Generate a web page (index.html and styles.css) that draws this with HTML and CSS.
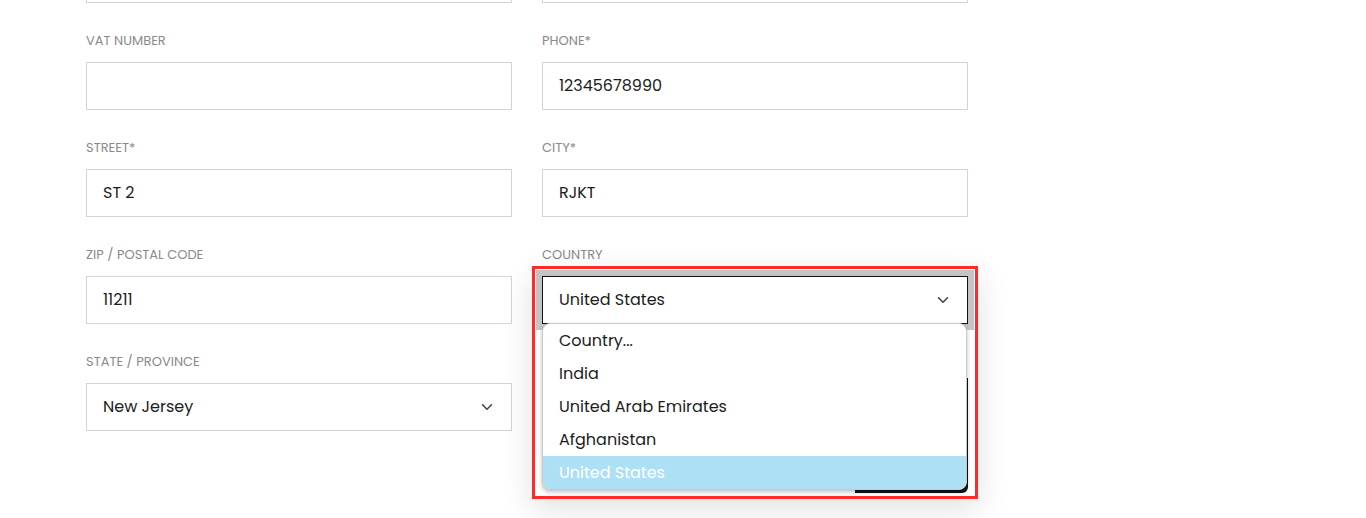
FILE: index.html
```html
<!DOCTYPE html>
<html lang="en">
<head>
<meta charset="utf-8">
<title>Billing address</title>
<link rel="stylesheet" href="styles.css">
</head>
<body>
<form class="form">
  <div class="field">
    <label class="label"></label>
    <div class="input"></div>
  </div>
  <div class="field">
    <label class="label"></label>
    <div class="input"></div>
  </div>

  <div class="field">
    <label class="label">VAT NUMBER</label>
    <div class="input"></div>
  </div>
  <div class="field">
    <label class="label">PHONE*</label>
    <div class="input">12345678990</div>
  </div>

  <div class="field">
    <label class="label">STREET*</label>
    <div class="input">ST 2</div>
  </div>
  <div class="field">
    <label class="label">CITY*</label>
    <div class="input">RJKT</div>
  </div>

  <div class="field">
    <label class="label">ZIP / POSTAL CODE</label>
    <div class="input">11211</div>
  </div>
  <div class="field field-country">
    <label class="label">COUNTRY</label>
    <div class="input select select-focus">
      <span>United States</span>
      <svg class="chev" width="12" height="8" viewBox="0 0 12 8"><path d="M1.5 1.8 6 6.2 10.5 1.8" fill="none" stroke="#444" stroke-width="1.6" stroke-linecap="round" stroke-linejoin="round"/></svg>
    </div>
    <div class="behind-btn"></div>
    <ul class="options">
      <li>Country...</li>
      <li>India</li>
      <li>United Arab Emirates</li>
      <li>Afghanistan</li>
      <li class="selected">United States</li>
    </ul>
    <div class="highlight-box"></div>
  </div>

  <div class="field">
    <label class="label">STATE / PROVINCE</label>
    <div class="input select">
      <span>New Jersey</span>
      <svg class="chev" width="12" height="8" viewBox="0 0 12 8"><path d="M1.5 1.8 6 6.2 10.5 1.8" fill="none" stroke="#444" stroke-width="1.6" stroke-linecap="round" stroke-linejoin="round"/></svg>
    </div>
  </div>
</form>
</body>
</html>
```

FILE: styles.css
```css
html, body {
  margin: 0;
  padding: 0;
  background: #ffffff;
  overflow: hidden;
}

body {
  width: 1366px;
  height: 518px;
  font-family: "Poppins", "Inter", "Open Sans", sans-serif;
  color: #1c1c1c;
}

.form {
  display: grid;
  grid-template-columns: 426px 426px;
  column-gap: 30px;
  row-gap: 27px;
  padding-left: 86px;
  margin-top: -77px;
}

.field {
  display: flex;
  flex-direction: column;
  gap: 12px;
}

.field-country {
  position: relative;
}

.label {
  display: block;
  height: 20px;
  line-height: 22px;
  font-size: 13px;
  color: #8a8a8a;
  letter-spacing: 0;
}

.input {
  box-sizing: border-box;
  height: 48px;
  border: 1px solid #d0d5db;
  background: #fff;
  padding: 0 16px;
  display: flex;
  align-items: center;
  font-size: 16px;
  line-height: 22px;
  color: #1c1c1c;
}

.select {
  justify-content: space-between;
  padding-right: 18px;
}

.chev {
  display: block;
}

.select-focus {
  border: 1px solid #111;
  box-shadow: 0 0 0 6px #c4c4c4;
  position: relative;
  z-index: 1;
}

.behind-btn {
  position: absolute;
  left: 313px;
  top: 134px;
  width: 113px;
  height: 115px;
  background: #111;
  border-radius: 0 0 6px 0;
  z-index: 2;
}

.options {
  position: absolute;
  left: 0;
  top: 79px;
  width: 425px;
  box-sizing: border-box;
  margin: 0;
  padding: 0;
  list-style: none;
  background: #fff;
  border: 1px solid #c9c9c9;
  border-radius: 8px;
  overflow: hidden;
  box-shadow: 0 2px 4px rgba(0, 0, 0, 0.25);
  z-index: 3;
}

.options li {
  height: 33px;
  line-height: 33px;
  padding-left: 16px;
  font-size: 16px;
  color: #1c1c1c;
}

.options li.selected {
  background: #ade0f5;
  color: #ffffff;
}

.highlight-box {
  position: absolute;
  left: -10px;
  top: 22px;
  width: 446px;
  height: 233px;
  box-sizing: border-box;
  border: 3px solid #ff2a2a;
  box-shadow: 0 10px 30px rgba(0, 0, 0, 0.12);
  z-index: 4;
  pointer-events: none;
}
```
